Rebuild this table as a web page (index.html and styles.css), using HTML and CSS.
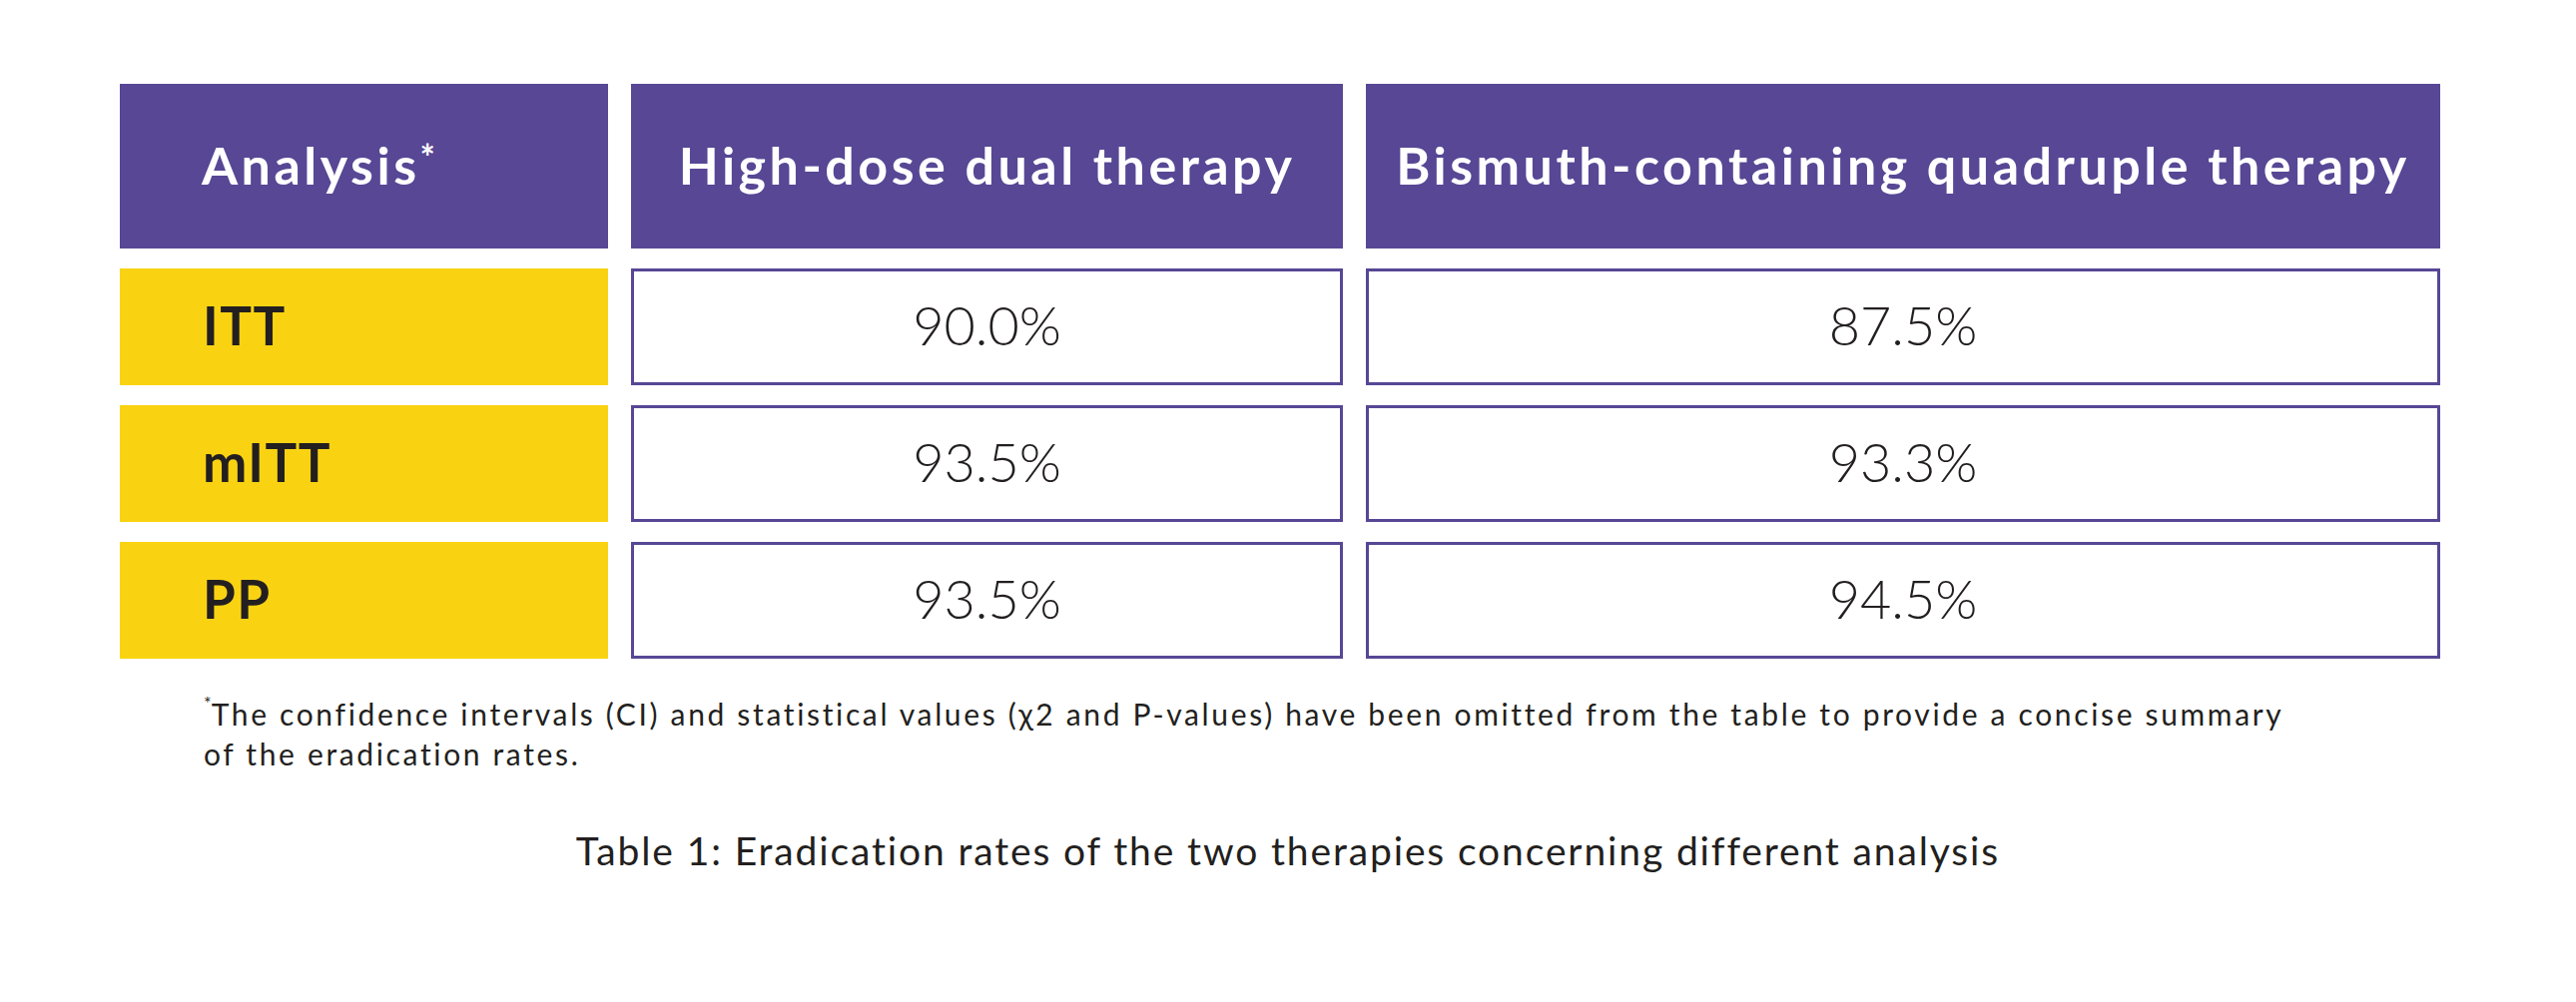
FILE: index.html
```html
<!DOCTYPE html>
<html lang="en">
<head>
<meta charset="utf-8">
<title>Eradication rates</title>
<link rel="stylesheet" href="styles.css">
</head>
<body>
<main class="page">
  <div class="grid">
    <div class="cell head head-first">Analysis<sup class="ast">*</sup></div>
    <div class="cell head">High-dose dual therapy</div>
    <div class="cell head">Bismuth-containing quadruple therapy</div>

    <div class="cell label">ITT</div>
    <div class="cell value">90.0%</div>
    <div class="cell value">87.5%</div>

    <div class="cell label">mITT</div>
    <div class="cell value">93.5%</div>
    <div class="cell value">93.3%</div>

    <div class="cell label">PP</div>
    <div class="cell value">93.5%</div>
    <div class="cell value">94.5%</div>
  </div>
  <p class="note"><sup class="note-ast">*</sup>The confidence intervals (CI) and statistical values (χ2 and P-values) have been omitted from the table to provide a concise summary<br>of the eradication rates.</p>
  <p class="caption">Table 1: Eradication rates of the two therapies concerning different analysis</p>
</main>
</body>
</html>
```

FILE: styles.css
```css
html, body {
  margin: 0;
  padding: 0;
  background: #ffffff;
}
.page {
  width: 2580px;
  height: 1004px;
  box-sizing: border-box;
  padding: 84px 0 0 120px;
  font-family: Lato, "Liberation Sans", sans-serif;
  color: #231f20;
}
.grid {
  display: grid;
  grid-template-columns: 489px 713px 1076px;
  grid-template-rows: 165px 117px 117px 117px;
  column-gap: 23px;
  row-gap: 20px;
  width: 2324px;
}
.cell {
  display: flex;
  align-items: center;
  box-sizing: border-box;
}
.head {
  background: #574795;
  color: #ffffff;
  font-weight: 700;
  font-size: 52px;
  letter-spacing: 3.5px;
  justify-content: center;
  white-space: nowrap;
  padding-bottom: 4px;
}
.head-first {
  justify-content: flex-start;
  padding-left: 82px;
}
.ast {
  font-size: 36px;
  vertical-align: top;
  line-height: 1;
  position: relative;
  top: -8px;
  letter-spacing: 0;
}
.label {
  background: #f9d312;
  font-weight: 700;
  font-size: 53px;
  letter-spacing: 1.5px;
  padding-left: 83px;
  padding-bottom: 4px;
  color: #231f20;
}
.value {
  border: 3px solid #574795;
  justify-content: center;
  font-weight: 300;
  font-size: 54px;
  padding-bottom: 4px;
  color: #231f20;
}
.note {
  margin: 35px 0 0 84px;
  font-size: 30px;
  letter-spacing: 2.65px;
  line-height: 40px;
  font-weight: 400;
  white-space: nowrap;
}
.note-ast {
  font-size: 18px;
  vertical-align: top;
  line-height: 1;
  letter-spacing: 0;
}
.caption {
  margin: 54px 0 0 -120px;
  width: 2580px;
  text-align: center;
  font-size: 39px;
  letter-spacing: 1.87px;
  font-weight: 400;
}
```
